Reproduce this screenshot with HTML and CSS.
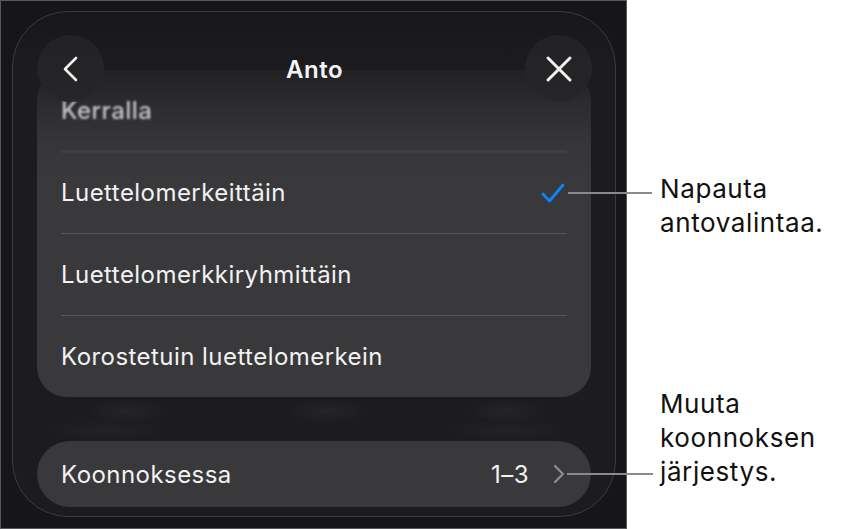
FILE: index.html
```html
<!DOCTYPE html>
<html lang="fi">
<head>
    <meta charset="UTF-8">
    <meta name="viewport" content="width=device-width, initial-scale=1.0">
    <title>Anto</title>
    <link rel="stylesheet" href="styles.css">
</head>
<body>
    <div class="page">
        <div class="device">
            <div class="sheet">
                <div class="header">
                    <div class="round-btn">
                        <svg width="20" height="28" viewBox="0 0 20 28"><path d="M15 3 L4 14 L15 25" fill="none" stroke="#f2f2f2" stroke-width="2.6" stroke-linecap="round" stroke-linejoin="round"/></svg>
                    </div>
                    <div class="title">Anto</div>
                    <div class="round-btn">
                        <svg width="30" height="30" viewBox="0 0 30 30"><path d="M4 4 L26 26 M26 4 L4 26" fill="none" stroke="#f2f2f2" stroke-width="3" stroke-linecap="round"/></svg>
                    </div>
                </div>

                <div class="card">
                    <div class="row faded">Kerralla</div>
                    <div class="row">
                        <span>Luettelomerkeittäin</span>
                        <svg class="check" width="26" height="22" viewBox="0 0 26 22"><path d="M3 12 L9.5 19 L23 3" fill="none" stroke="#0a84ff" stroke-width="2.8" stroke-linecap="round" stroke-linejoin="round"/></svg>
                    </div>
                    <div class="row">Luettelomerkkiryhmittäin</div>
                    <div class="row">Korostetuin luettelomerkein</div>
                </div>

                <div class="shelf"></div>

                <div class="pill">
                    <span>Koonnoksessa</span>
                    <span class="value">1–3
                        <svg width="14" height="20" viewBox="0 0 14 20"><path d="M3 2 L11 10 L3 18" fill="none" stroke="#8e8e93" stroke-width="2.2" stroke-linecap="round" stroke-linejoin="round"/></svg>
                    </span>
                </div>
            </div>
        </div>

        <div class="notes">
            <p class="note first">Napauta<br>antovalintaa.</p>
            <p class="note second">Muuta<br>koonnoksen<br>järjestys.</p>
        </div>

        <div class="leader one"></div>
        <div class="leader two"></div>
    </div>
</body>
</html>
```

FILE: styles.css
```css
body {
    margin: 0;
    padding: 0;
    background-color: #ffffff;
    font-family: Inter, "Noto Sans", sans-serif;
}

.page {
    position: relative;
    display: flex;
    width: 851px;
    height: 529px;
    overflow: hidden;
}

.device {
    width: 627px;
    height: 529px;
    box-sizing: border-box;
    border: 1px solid #58585a;
    background-color: #161618;
    padding: 10px 10px 11px 11px;
}

.sheet {
    position: relative;
    height: 100%;
    box-sizing: border-box;
    border: 1px solid #3b3b3d;
    border-radius: 56px;
    background: linear-gradient(to bottom, #18181a 0, #1c1c1e 60px, #1c1c1e 100%);
    padding: 58px 24px 8px 24px;
    display: flex;
    flex-direction: column;
}

.header {
    position: absolute;
    top: 23px;
    left: 24px;
    right: 23px;
    display: flex;
    justify-content: space-between;
    align-items: center;
    z-index: 2;
}

.round-btn {
    width: 67px;
    height: 67px;
    border-radius: 50%;
    background-color: rgba(38, 38, 40, 0.85);
    display: flex;
    align-items: center;
    justify-content: center;
}

.title {
    color: #f5f5f5;
    font-size: 24px;
    font-weight: 600;
    letter-spacing: 0.5px;
    padding-top: 2px;
}

.card {
    background: linear-gradient(to bottom, #212123 0, #2c2c2e 35px, #363638 75px, #39393b 110px);
    border-radius: 30px;
    padding: 0 24px;
}

.row {
    height: 81px;
    display: flex;
    align-items: center;
    justify-content: space-between;
    color: #f2f2f2;
    font-size: 24px;
    letter-spacing: 0.45px;
    border-bottom: 1px solid #56565a;
}

.row:last-child {
    border-bottom: none;
}

.row.faded {
    color: #c6c6c8;
    filter: blur(1px);
    font-weight: 500;
}

.check {
    margin-right: 1px;
}

.shelf {
    height: 44px;
    background:
        radial-gradient(ellipse 40px 12px at 90px 14px, rgba(255,255,255,0.04), transparent),
        radial-gradient(ellipse 40px 12px at 290px 14px, rgba(255,255,255,0.04), transparent),
        radial-gradient(ellipse 40px 12px at 470px 14px, rgba(255,255,255,0.04), transparent),
        radial-gradient(ellipse 60px 10px at 70px 33px, rgba(255,255,255,0.03), transparent),
        radial-gradient(ellipse 60px 10px at 470px 33px, rgba(255,255,255,0.03), transparent);
}

.pill {
    height: 66px;
    border-radius: 33px;
    background-color: #39393b;
    display: flex;
    align-items: center;
    justify-content: space-between;
    padding: 0 25px 0 24px;
    color: #f2f2f2;
    font-size: 24px;
    letter-spacing: 0.45px;
}

.pill .value {
    display: flex;
    align-items: center;
    gap: 23px;
}

.notes {
    flex: 1;
    padding-left: 33px;
    padding-top: 172px;
}

.note {
    margin: 0;
    color: #111111;
    font-size: 26px;
    letter-spacing: 0.6px;
    line-height: 34px;
}

.note.second {
    margin-top: 147px;
}

.leader {
    position: absolute;
    height: 2px;
    background-color: #8a8a8a;
}

.leader.one {
    left: 568px;
    width: 84px;
    top: 192px;
}

.leader.two {
    left: 567px;
    width: 86px;
    top: 473px;
}
```
